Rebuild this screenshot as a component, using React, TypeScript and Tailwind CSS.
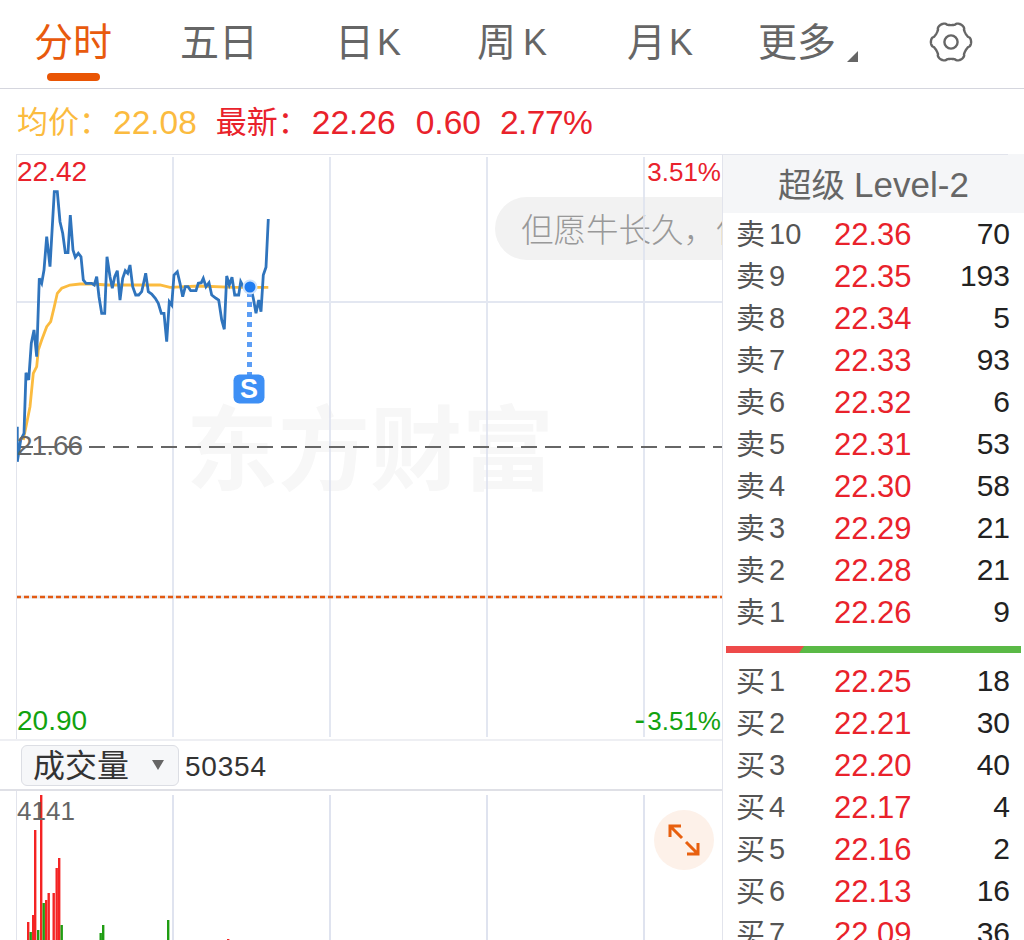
const blue: [number, number][] = [[52,830],[52,935],[62,870],[72,850],[78,668],[86,690],[94,580],[102,540],[110,620],[118,385],[125,400],[132,360],[140,260],[150,350],[163,125],[172,125],[180,215],[188,250],[196,308],[204,308],[211,195],[219,300],[226,322],[235,310],[243,320],[250,390],[258,400],[275,400],[283,405],[290,380],[297,440],[305,490],[314,490],[321,320],[330,380],[337,415],[344,380],[352,362],[360,450],[368,385],[376,362],[383,370],[390,345],[398,410],[407,435],[416,435],[425,425],[437,370],[445,425],[455,432],[466,445],[475,460],[484,490],[492,490],[500,575],[508,455],[515,465],[522,375],[532,365],[540,400],[548,440],[556,410],[564,410],[572,422],[588,422],[595,400],[604,398],[610,385],[618,410],[627,398],[635,435],[648,445],[656,450],[665,510],[673,538],[680,378],[688,405],[696,382],[704,435],[716,435],[722,395],[730,410],[750,400],[760,445],[768,490],[776,450],[783,485],[790,375],[798,352],[805,207]];
const yellow: [number, number][] = [[70,870],[90,770],[100,670],[110,650],[115,600],[125,570],[140,530],[152,515],[163,470],[172,430],[185,415],[210,405],[240,402],[280,402],[320,405],[400,405],[480,405],[510,412],[600,408],[700,412],[805,412]];
const pts = (a: [number, number][]) => a.map(([x, y]) => `${(x / 3).toFixed(1)},${(y / 3).toFixed(1)}`).join(" ");

const gearPath = (() => {
  let d = "";
  for (let i = 0; i < 180; i++) {
    const t = (i / 180) * Math.PI * 2;
    const c = Math.cos(6 * t);
    const s = Math.sign(c) * Math.pow(Math.abs(c), 0.55);
    const r = 18.5 + 1.6 * s;
    d += `${i === 0 ? "M" : "L"}${(22 + r * Math.cos(t)).toFixed(2)} ${(20 + r * Math.sin(t)).toFixed(2)}`;
  }
  return d + "Z";
})();

const tabs = [["五日", "", ""], ["日", "K", "ml-[3px]"], ["周", "K", "ml-[7px]"], ["月", "K", "ml-[3px]"]];
const asks = [["卖","10","22.36","70"],["卖","9","22.35","193"],["卖","8","22.34","5"],["卖","7","22.33","93"],["卖","6","22.32","6"],["卖","5","22.31","53"],["卖","4","22.30","58"],["卖","3","22.29","21"],["卖","2","22.28","21"],["卖","1","22.26","9"]];
const bids = [["买","1","22.25","18"],["买","2","22.21","30"],["买","3","22.20","40"],["买","4","22.17","4"],["买","5","22.16","2"],["买","6","22.13","16"],["买","7","22.09","36"]];
const font = "font-['Liberation_Sans','Noto_Sans_CJK_SC',sans-serif]";

function Row({ r }: { r: string[] }) {
  return (
    <div className="flex h-[42px] items-center pl-[13px] pr-[14px]">
      <span className="flex w-[98px] shrink-0 items-center pt-[2px] text-[29px] text-[#555]">
        {r[0]}
        <span className="ml-[4px] pb-[3px] text-[29px]">{r[1]}</span>
      </span>
      <span className="w-[77px] shrink-0 text-right text-[31px] text-[#e9222b] whitespace-nowrap">{r[2]}</span>
      <span className="flex-1 pb-[4px] text-right text-[30px] text-[#222]">{r[3]}</span>
    </div>
  );
}

const bars = [
  [27,222,"r"],[32,215,"r"],[34,130,"r"],[40,95,"r"],[45,200,"r"],[47.5,193,"r"],[52.5,193,"r"],[55.5,168,"r"],[58,158,"r"],
  [29.5,232,"g"],[37,230,"g"],[42.5,203,"g"],[60.5,225,"g"],[99.5,233,"g"],[102,225,"g"],[167,220,"g"],[227,239,"r"],
] as [number, number, string][];

export default function App() {
  return (
    <div className={`h-[940px] w-[1024px] overflow-hidden bg-white ${font}`}>
      <div className="flex h-[89px] items-start border-b border-[#d5d6de] text-[39px] leading-none text-[#666]">
        <div className="relative ml-[34px] w-[146px] pt-[23px] text-[#e85a0d]">
          分时
          <div className="absolute left-[13px] top-[73px] h-[8px] w-[53px] rounded-full bg-[#e95504]" />
        </div>
        {tabs.map(([a, k, m], i) => (
          <div key={a} className={`flex items-center pt-[23px] whitespace-nowrap ${["w-[155px]","w-[142px]","w-[150px]","w-[131px]"][i]}`}>
            {a}
            {k && <span className={`${m} text-[36px]`}>{k}</span>}
          </div>
        ))}
        <div className="relative w-[171px] pt-[23px] whitespace-nowrap">
          更多
          <div className="absolute left-[89px] top-[51px] h-0 w-0 border-b-[11px] border-l-[11px] border-b-[#666] border-l-transparent" />
        </div>
        <svg width="44" height="40" viewBox="0 0 44 40" fill="none" stroke="#666" strokeWidth="2.4" className="mt-[22px]">
          <path d={gearPath} />
          <circle cx="22" cy="20" r="6.600" />
        </svg>
      </div>

      <div className="flex h-[65px] items-center pl-[17px] pt-[2px] text-[31px] leading-none whitespace-nowrap">
        <span className="text-[#fbbb3f]">均价：</span>
        <span className="ml-[3px] text-[33.500px] text-[#fbbb3f]">22.08</span>
        <span className="ml-[19px] text-[#e9222b]">最新：</span>
        <span className="ml-[3px] text-[33.500px] text-[#e9222b]">22.26</span>
        <span className="ml-[20px] text-[33.500px] text-[#e9222b]">0.60</span>
        <span className="ml-[19px] text-[33.500px] tracking-[-0.5px] text-[#e9222b]">2.77%</span>
      </div>

      <div className="flex">
        <div className="w-[722px] shrink-0">
          <div className="relative ml-[16px] h-[585px] w-[706px] overflow-hidden border-l border-t border-[#e2e4ec]">
            <div className="absolute left-[169px] top-[238px] select-none text-[92px] font-bold leading-[100px] whitespace-nowrap text-[#f7f7f7] font-['Noto_Sans_CJK_SC',sans-serif]">东方财富</div>
            <div className="absolute right-0 top-[42px] flex h-[63px] w-[227px] items-center overflow-hidden rounded-l-[32px] bg-[#f2f2f2] pl-[26px] text-[32.500px] whitespace-nowrap text-[#999] font-['Noto_Sans_CJK_SC',sans-serif] font-light">但愿牛长久，但愿牛长久</div>
            <svg width="707" height="586" viewBox="16 154 707 586" className="absolute -left-px -top-px">
              <g stroke="#dfe3ef" strokeWidth="2" opacity="0.85">
                <path d="M173 157V737M330 157V737M487 157V737M644 157V737M16 302H723" />
              </g>
              <path d="M17 447H723" stroke="#666" strokeWidth="2" strokeDasharray="16 8" />
              <path d="M16 597H723" stroke="#d5d6de" strokeWidth="3" opacity="0.5" />
              <path d="M16 597H723" stroke="#e25a12" strokeWidth="2.500" strokeDasharray="5 3" />
              <g transform="translate(0 150)">
                <polyline points={pts(yellow)} fill="none" stroke="#fbbb3f" strokeWidth="2.800" />
                <polyline points={pts(blue)} fill="none" stroke="#2f74bd" strokeWidth="2.800" />
              </g>
              <path d="M249.500 292V375" stroke="#5b9df5" strokeWidth="5" strokeDasharray="5 5" />
              <circle cx="250" cy="287" r="7.500" fill="#cfe2fb" />
              <circle cx="250" cy="287" r="5.500" fill="#1f7bf0" />
              <rect x="233.500" y="374.500" width="31" height="29" rx="6" fill="#3d8ff5" />
            </svg>
            <span className="absolute left-[216px] top-[220px] w-[32px] text-center text-[27px] font-bold leading-[29px] text-white">S</span>
            <span className="absolute left-0 top-[2px] text-[28px] leading-[30px] text-[#e9222b]">22.42</span>
            <span className="absolute left-0 top-[276px] text-[28px] leading-[30px] tracking-[-1px] text-[#666]">21.66</span>
            <span className="absolute bottom-[3px] left-0 text-[28px] leading-[30px] text-[#12a20f]">20.90</span>
            <span className="absolute right-[1px] top-[2px] text-[26px] leading-[30px] text-[#e9222b]">3.51%</span>
            <span className="absolute bottom-[3px] right-[1px] text-[26px] leading-[30px] text-[#12a20f]"><span className="mr-[2px] text-[32px]">-</span>3.51%</span>
          </div>
          <div className="flex h-[52px] items-center border-y-2 border-[#eeeff3] pl-[21px] border-b-[#dfe0e6]">
            <div className="flex h-[41px] w-[158px] items-center justify-between rounded-[6px] border border-[#dcdee4] bg-[#f6f7f9] pl-[11px] pr-[14px] text-[32px] text-[#333]">
              <span className="pt-[2px]">成交量</span>
              <span className="h-0 w-0 border-x-[6px] border-t-[10px] border-x-transparent border-t-[#666]" />
            </div>
            <span className="ml-[6px] pt-[4px] text-[28px] tracking-[0.8px] text-[#333]">50354</span>
          </div>
          <div className="relative ml-[16px] h-[149px] w-[706px] overflow-hidden border-l border-[#e2e4ec]">
            <svg width="707" height="149" viewBox="16 791 707 149" className="absolute -left-px top-0">
              <path d="M173 795V940M330 795V940M487 795V940M644 795V940" stroke="#dfe3ef" strokeWidth="2" />
              {bars.map(([x, top, c], i) => (
                <rect key={i} x={x} y={700 + top} width="2.400" height={240 - top} fill={c === "r" ? "#f42424" : "#1f9d12"} />
              ))}
            </svg>
            <span className="absolute left-0 top-[5px] text-[26px] leading-[30px] text-[#666]">4141</span>
            <div className="absolute left-[637px] top-[19px] flex h-[60px] w-[60px] items-center justify-center rounded-full bg-[#fdf1e9]">
              <svg width="32" height="32" viewBox="0 0 32 32" fill="none" stroke="#e8600f" strokeWidth="3">
                <path d="M2 13V2h11M2 2l12 12M30 19v11H19M30 30L18 18" />
              </svg>
            </div>
          </div>
        </div>

        <div className="w-[302px] shrink-0 border-l border-[#e2e4ec]">
          <div className="h-[59px] bg-[#f5f6f8] text-center text-[33.500px] leading-[59px] text-[#666]">
            <div className="h-px w-[285px] bg-[#e2e4ec]" />
            超级<span className="ml-[9px] text-[35px]">Level-2</span>
          </div>
          <div className="mt-[1px]">{asks.map((r) => <Row key={r[1]} r={r} />)}</div>
          <div className="mx-[3px] mt-[12px] flex h-[7px]">
            <div className="h-full w-[73px] bg-[#ee4a4a]" />
            <div className="h-0 w-0 border-b-[7px] border-l-[5px] border-b-[#5ab946] border-l-[#ee4a4a]" />
            <div className="h-full flex-1 bg-[#5ab946]" />
          </div>
          <div className="mt-[8px]">{bids.map((r) => <Row key={r[1]} r={r} />)}</div>
        </div>
      </div>
    </div>
  );
}
